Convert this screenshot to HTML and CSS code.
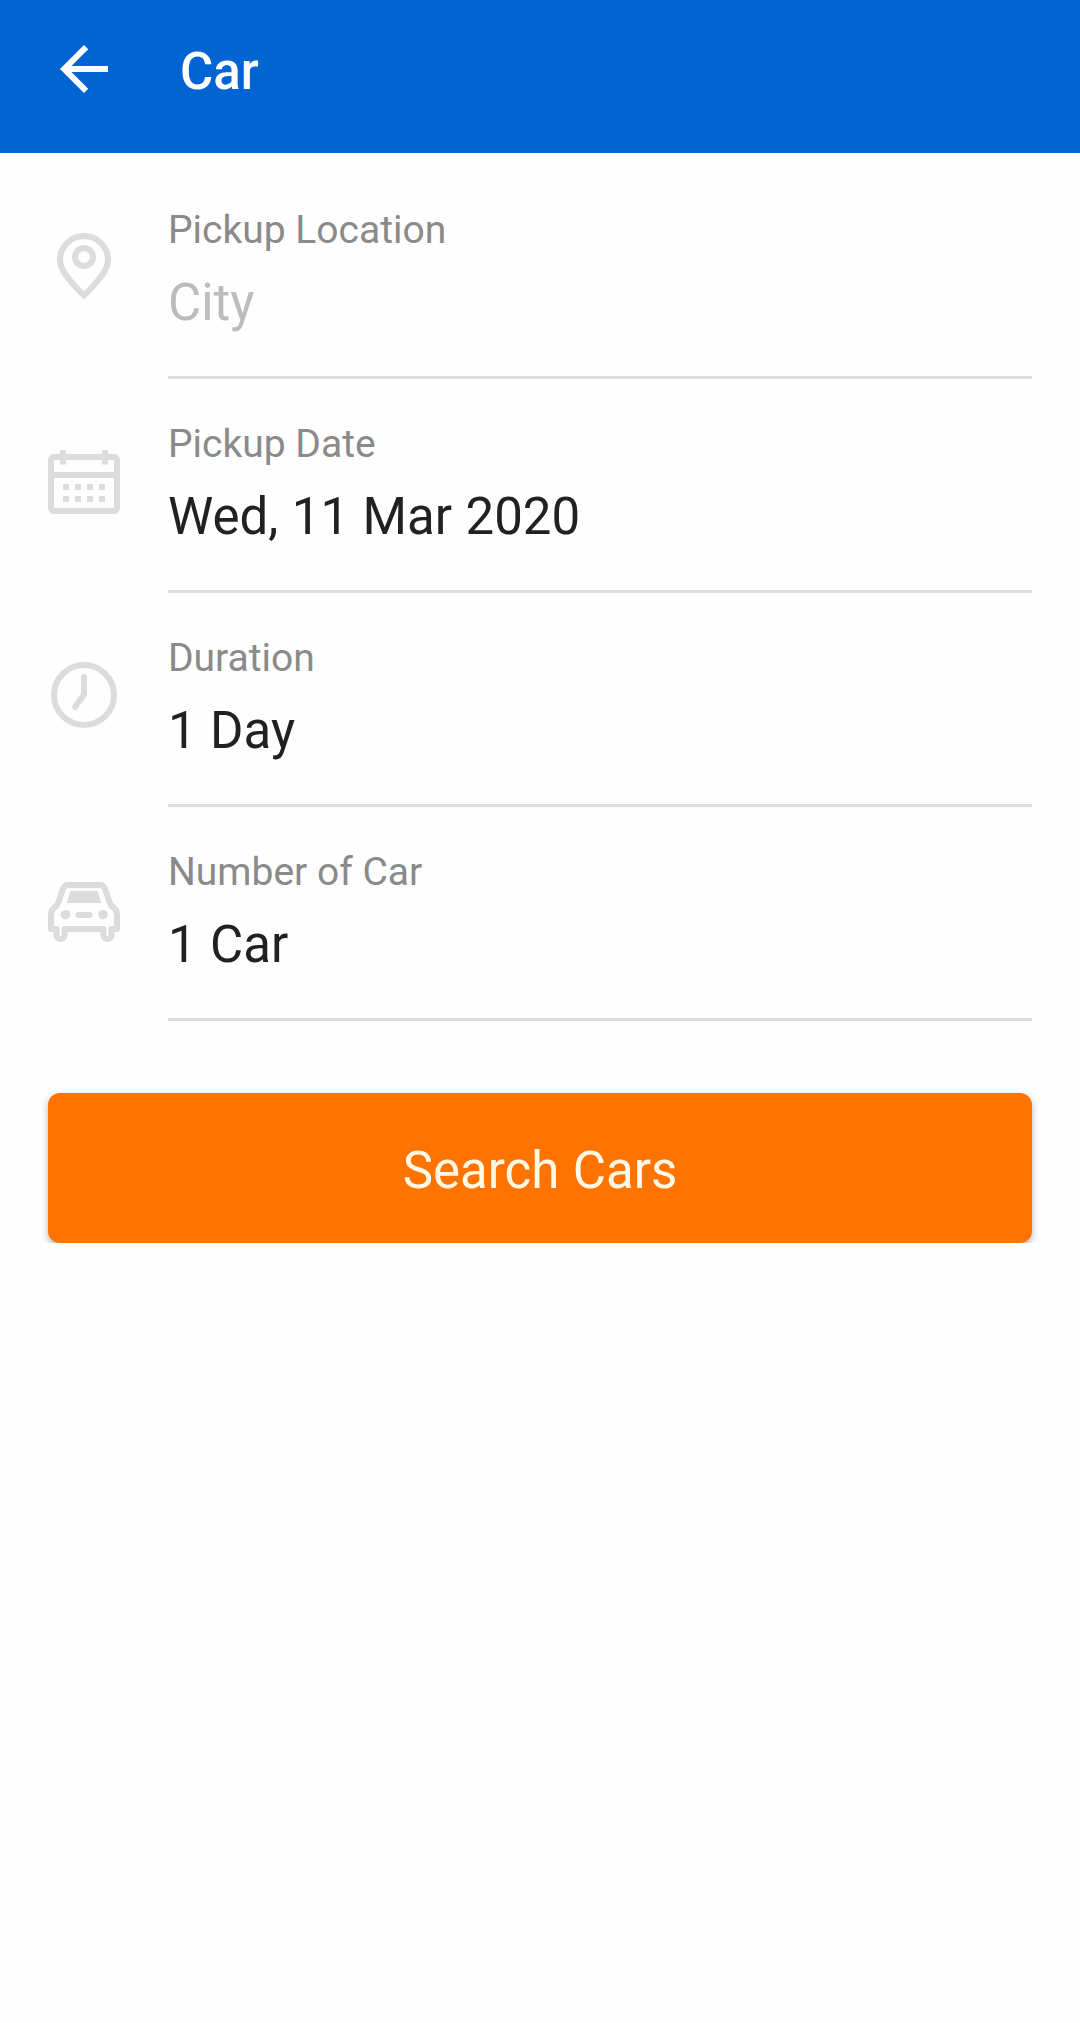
FILE: index.html
```
<!DOCTYPE html>
<html lang="en">
<head>
    <meta charset="UTF-8">
    <meta name="viewport" content="width=device-width, initial-scale=1.0">
    <title>Car</title>

    <link rel="stylesheet" href="styles.css">
</head>
<body>

    <header class="header">
        <svg class="back" viewBox="0 0 24 24">
            <path d="M20 11H7.83l5.59-5.59L12 4l-8 8 8 8 1.41-1.41L7.83 13H20v-2z"/>
        </svg>
        <h1 class="title">Car</h1>
    </header>

    <main class="form">

        <div class="row">
            <svg class="icon" viewBox="0 0 72 72">
                <path d="M36 64.3C29 57.5 12 42 12 29a24 24 0 0 1 48 0C60 42 43 57.5 36 64.3z"/>
                <circle cx="36" cy="26" r="9"/>
            </svg>
            <div class="field">
                <div class="label">Pickup Location</div>
                <div class="value empty">City</div>
            </div>
        </div>

        <div class="row">
            <svg class="icon" viewBox="0 0 72 72">
                <rect x="3" y="12" width="66" height="54" rx="3"/>
                <path d="M3 30h66M15 5v14.500M57 5v14.500"/>
                <path d="M15 42h42M15 54h42" stroke-dasharray="6 6"/>
            </svg>
            <div class="field">
                <div class="label">Pickup Date</div>
                <div class="value">Wed, 11 Mar 2020</div>
            </div>
        </div>

        <div class="row">
            <svg class="icon" viewBox="0 0 72 72">
                <circle cx="36" cy="36" r="30"/>
                <path d="M36 18v17.500L27 48" stroke-linecap="round" stroke-linejoin="round"/>
            </svg>
            <div class="field">
                <div class="label">Duration</div>
                <div class="value">1 Day</div>
            </div>
        </div>

        <div class="row">
            <svg class="icon" viewBox="0 0 72 72">
                <path d="M3 56V42Q3 37 7 34Q9 32.500 10 30L15 16Q16.500 12 20 12H52Q55.500 12 57 16L62 30Q63 32.500 65 34Q69 37 69 42V56H63.500V62a4 4 0 0 1-8 0V56H16.500V62a4 4 0 0 1-8 0V56z" stroke-linejoin="round"/>
                <path class="fill" d="M22.500 18h27l4 12h-35z"/>
                <circle class="fill" cx="17.500" cy="41.700" r="4.800"/>
                <circle class="fill" cx="55" cy="41.700" r="4.800"/>
                <rect class="fill" x="27.500" y="39" width="17" height="6" rx="3"/>
            </svg>
            <div class="field">
                <div class="label">Number of Car</div>
                <div class="value">1 Car</div>
            </div>
        </div>

        <button class="search" type="button">Search Cars</button>

    </main>

</body>
</html>
```

FILE: styles.css
```
*{
    box-sizing: border-box;
}

body{
    margin: 0;
    background: #fefefe;
    font-family: Roboto, "Liberation Sans", sans-serif;
}

/* top bar */
.header{
    display: flex;
    align-items: center;
    gap: 60px;
    height: 153px;
    padding: 0 48px 15px;
    background: #0064d2;
    color: #fff;
}
.back{
    width: 72px;
    height: 72px;
    fill: currentColor;
}
.title{
    margin: 6px 0 0;
    font-size: 51px;
    line-height: 60px;
    font-weight: 500;
}

/* search form */
.form{
    padding: 12px 48px 0;
}
.row{
    display: flex;
    gap: 48px;
    height: 214px;
}
.icon{
    flex: none;
    width: 72px;
    height: 72px;
    margin-top: 66px;
    fill: none;
    stroke: #dcdcdc;
    stroke-width: 6;
}
.icon .fill{
    fill: #dcdcdc;
    stroke: none;
}
.field{
    flex: 1;
    padding-top: 42px;
    border-bottom: 3px solid #dcdcdc;
}
.label{
    font-size: 39px;
    line-height: 46px;
    color: #8a8a8a;
}
.value{
    margin-top: 20px;
    font-size: 51px;
    line-height: 60px;
    word-spacing: .8px;
    color: #212121;
}
.empty{
    color: #bcbcbc;
}

.search{
    display: block;
    width: 100%;
    height: 150px;
    margin-top: 72px;
    padding: 6px 0 0;
    border: 0;
    border-radius: 12px;
    background: #ff7300;
    box-shadow: 0 3px 7px rgba(0, 0, 0, .3);
    color: #fff8e6;
    font-family: inherit;
    font-size: 51px;
    line-height: 60px;
    word-spacing: .8px;
}
```
